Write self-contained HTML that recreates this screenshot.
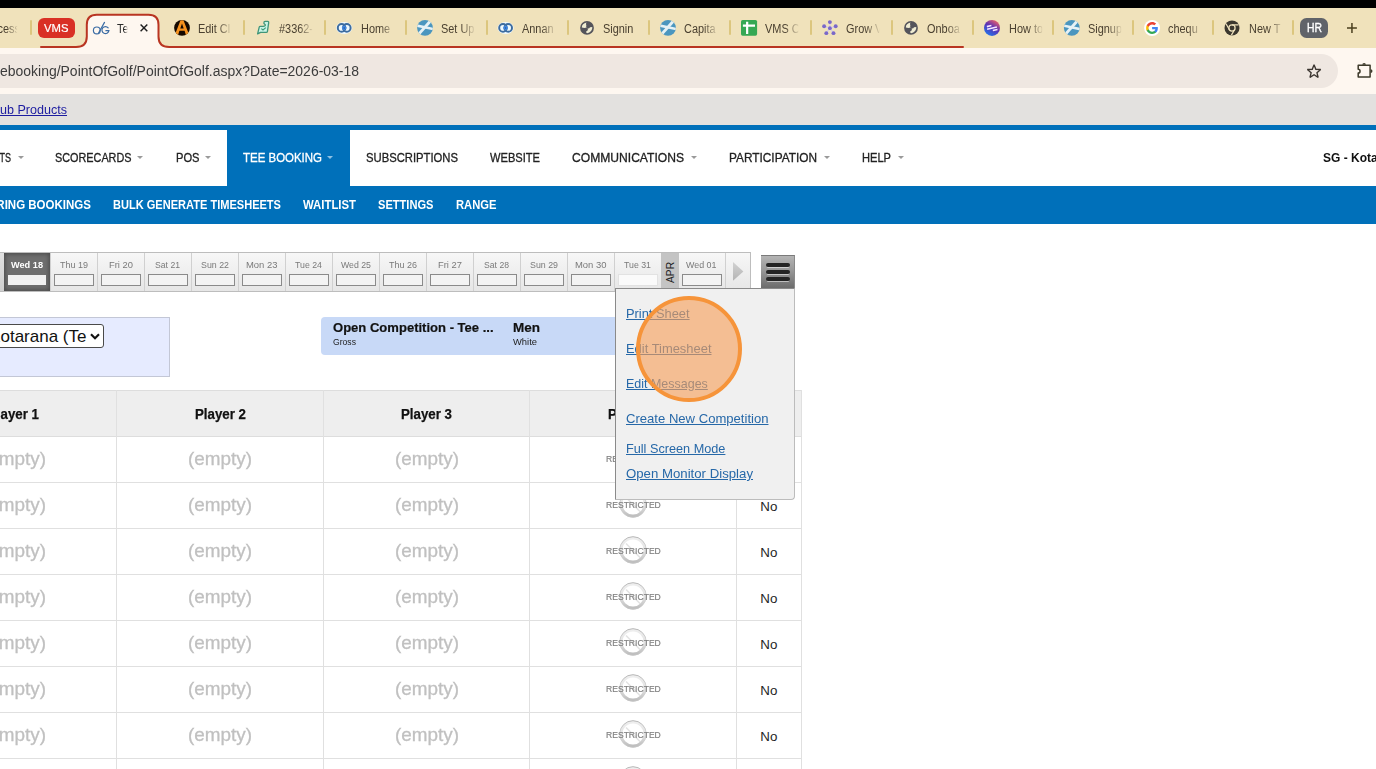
<!DOCTYPE html>
<html>
<head>
<meta charset="utf-8">
<title>Tee Booking</title>
<style>
*{box-sizing:border-box;margin:0;padding:0}
html,body{width:1376px;height:769px;overflow:hidden;background:#fff;font-family:"Liberation Sans",sans-serif;}
#root{position:relative;width:1376px;height:769px;overflow:hidden;background:#fff}
.a{position:absolute}
.t{position:absolute;white-space:nowrap;line-height:1.2;transform-origin:0 0}
svg{position:absolute;overflow:visible}

</style>
</head>
<body>
<div id="root">
<div class="a" style="left:0;top:0;width:1376px;height:8px;background:#000"></div><div class="a" style="left:0;top:8px;width:1376px;height:40px;background:#f0e2bb"></div><div class="a" style="left:0;top:48px;width:1376px;height:46px;background:#fef7f0"></div><div class="a" style="left:-30px;top:54px;width:1368px;height:34px;border-radius:17px;background:#efe7e1"></div><div class="t " style="left:0px;top:63px;font-size:14px;color:#3c3c3c;font-weight:400;transform:scaleX(0.9974);">ebooking/PointOfGolf/PointOfGolf.aspx?Date=2026-03-18</div><div class="a" style="left:0;top:94px;width:1376px;height:31px;background:#e3e1df"></div><div class="t " style="left:0px;top:102px;font-size:13px;color:#1c1ca0;font-weight:400;text-decoration:underline;transform:scaleX(0.9658);">ub Products</div><svg style="left:0;top:8px" width="1376" height="41" viewBox="0 8 1376 41">
<path d="M76 48.5 Q86.8 47.5 86.8 37 V24.8 Q86.8 14.8 96.8 14.8 H148.5 Q158.5 14.8 158.5 24.8 V37 Q158.5 47.5 169.3 48.5 Z" fill="#fef7f0"/>
<path d="M41 47 H76 Q86.8 47 86.8 36.5 V24.8 Q86.8 14.8 96.8 14.8 H148.5 Q158.5 14.8 158.5 24.8 V36.5 Q158.5 47 169.3 47 H963" fill="none" stroke="#b93522" stroke-width="2" stroke-linecap="round"/>
</svg><div class="a" style="left:29.5px;top:20px;width:2px;height:15px;background:#dcc67e;border-radius:1px"></div><div class="a" style="left:243px;top:20px;width:2px;height:15px;background:#dcc67e;border-radius:1px"></div><div class="a" style="left:324px;top:20px;width:2px;height:15px;background:#dcc67e;border-radius:1px"></div><div class="a" style="left:405px;top:20px;width:2px;height:15px;background:#dcc67e;border-radius:1px"></div><div class="a" style="left:486px;top:20px;width:2px;height:15px;background:#dcc67e;border-radius:1px"></div><div class="a" style="left:566.7px;top:20px;width:2px;height:15px;background:#dcc67e;border-radius:1px"></div><div class="a" style="left:647.7px;top:20px;width:2px;height:15px;background:#dcc67e;border-radius:1px"></div><div class="a" style="left:728.7px;top:20px;width:2px;height:15px;background:#dcc67e;border-radius:1px"></div><div class="a" style="left:809.7px;top:20px;width:2px;height:15px;background:#dcc67e;border-radius:1px"></div><div class="a" style="left:890.7px;top:20px;width:2px;height:15px;background:#dcc67e;border-radius:1px"></div><div class="a" style="left:971.8px;top:20px;width:2px;height:15px;background:#dcc67e;border-radius:1px"></div><div class="a" style="left:1051.8px;top:20px;width:2px;height:15px;background:#dcc67e;border-radius:1px"></div><div class="a" style="left:1132px;top:20px;width:2px;height:15px;background:#dcc67e;border-radius:1px"></div><div class="a" style="left:1211.8px;top:20px;width:2px;height:15px;background:#dcc67e;border-radius:1px"></div><div class="a" style="left:1291.7px;top:20px;width:2px;height:15px;background:#dcc67e;border-radius:1px"></div><div class="t " style="left:-8.3px;top:22px;font-size:12px;color:#4a4030;font-weight:400;width:28px;overflow:hidden;transform:scaleX(0.91);-webkit-mask-image:linear-gradient(90deg,#000 58%,transparent 104%);mask-image:linear-gradient(90deg,#000 58%,transparent 104%);">ccess</div><div class="a" style="left:38px;top:18.2px;width:36.8px;height:19.5px;border-radius:6px;background:#d93025"></div><div class="t " style="left:44px;top:22px;font-size:11.5px;color:#fff;font-weight:400;-webkit-text-stroke:0.2px #fff;transform:scaleX(0.9791);">VMS</div><div class="a" style="left:1300px;top:17.8px;width:28.1px;height:19.8px;border-radius:6.5px;background:#606369"></div><div class="t " style="left:1306.6px;top:21px;font-size:12px;color:#fff;font-weight:400;-webkit-text-stroke:0.35px #fff;transform:scaleX(0.8649);">HR</div><svg style="left:1347px;top:23px" width="10" height="10" viewBox="0 0 10 10"><path d="M4.95 0V9.9M0 4.95H9.9" stroke="#4a3f1e" stroke-width="1.5" fill="none"/></svg><div class="t " style="left:117.3px;top:22px;font-size:12px;color:#2b2b2b;font-weight:400;width:11.8px;overflow:hidden;transform:scaleX(0.91);-webkit-mask-image:linear-gradient(90deg,#000 70%,transparent 100%);">Te</div><svg style="left:140.1px;top:24.1px" width="8" height="8" viewBox="0 0 8 8"><path d="M0.6 0.6L7.3 7.3M7.3 0.6L0.6 7.3" stroke="#1f1f1f" stroke-width="1.45" fill="none"/></svg><div class="t " style="left:198.4px;top:22px;font-size:12px;color:#4a4030;font-weight:400;width:37px;overflow:hidden;transform:scaleX(0.91);-webkit-mask-image:linear-gradient(90deg,#000 58%,transparent 104%);mask-image:linear-gradient(90deg,#000 58%,transparent 104%);">Edit Cl</div><div class="t " style="left:278.8px;top:22px;font-size:12px;color:#4a4030;font-weight:400;width:37px;overflow:hidden;transform:scaleX(0.91);-webkit-mask-image:linear-gradient(90deg,#000 58%,transparent 104%);mask-image:linear-gradient(90deg,#000 58%,transparent 104%);">#3362-</div><div class="t " style="left:360.5px;top:22px;font-size:12px;color:#4a4030;font-weight:400;width:37px;overflow:hidden;transform:scaleX(0.91);-webkit-mask-image:linear-gradient(90deg,#000 58%,transparent 104%);mask-image:linear-gradient(90deg,#000 58%,transparent 104%);">Home</div><div class="t " style="left:441px;top:22px;font-size:12px;color:#4a4030;font-weight:400;width:37px;overflow:hidden;transform:scaleX(0.91);-webkit-mask-image:linear-gradient(90deg,#000 58%,transparent 104%);mask-image:linear-gradient(90deg,#000 58%,transparent 104%);">Set Up</div><div class="t " style="left:522px;top:22px;font-size:12px;color:#4a4030;font-weight:400;width:37px;overflow:hidden;transform:scaleX(0.91);-webkit-mask-image:linear-gradient(90deg,#000 58%,transparent 104%);mask-image:linear-gradient(90deg,#000 58%,transparent 104%);">Annan</div><div class="t " style="left:603px;top:22px;font-size:12px;color:#4a4030;font-weight:400;width:37px;overflow:hidden;transform:scaleX(0.91);">Signin</div><div class="t " style="left:684px;top:22px;font-size:12px;color:#4a4030;font-weight:400;width:37px;overflow:hidden;transform:scaleX(0.91);-webkit-mask-image:linear-gradient(90deg,#000 58%,transparent 104%);mask-image:linear-gradient(90deg,#000 58%,transparent 104%);">Capita</div><div class="t " style="left:765px;top:22px;font-size:12px;color:#4a4030;font-weight:400;width:37px;overflow:hidden;transform:scaleX(0.91);-webkit-mask-image:linear-gradient(90deg,#000 58%,transparent 104%);mask-image:linear-gradient(90deg,#000 58%,transparent 104%);">VMS C</div><div class="t " style="left:846px;top:22px;font-size:12px;color:#4a4030;font-weight:400;width:37px;overflow:hidden;transform:scaleX(0.91);-webkit-mask-image:linear-gradient(90deg,#000 58%,transparent 104%);mask-image:linear-gradient(90deg,#000 58%,transparent 104%);">Grow V</div><div class="t " style="left:927.2px;top:22px;font-size:12px;color:#4a4030;font-weight:400;width:37px;overflow:hidden;transform:scaleX(0.91);-webkit-mask-image:linear-gradient(90deg,#000 58%,transparent 104%);mask-image:linear-gradient(90deg,#000 58%,transparent 104%);">Onboa</div><div class="t " style="left:1008.6px;top:22px;font-size:12px;color:#4a4030;font-weight:400;width:37px;overflow:hidden;transform:scaleX(0.91);-webkit-mask-image:linear-gradient(90deg,#000 58%,transparent 104%);mask-image:linear-gradient(90deg,#000 58%,transparent 104%);">How to</div><div class="t " style="left:1088px;top:22px;font-size:12px;color:#4a4030;font-weight:400;width:37px;overflow:hidden;transform:scaleX(0.91);-webkit-mask-image:linear-gradient(90deg,#000 58%,transparent 104%);mask-image:linear-gradient(90deg,#000 58%,transparent 104%);">Signup</div><div class="t " style="left:1168.4px;top:22px;font-size:12px;color:#4a4030;font-weight:400;width:37px;overflow:hidden;transform:scaleX(0.91);-webkit-mask-image:linear-gradient(90deg,#000 58%,transparent 104%);mask-image:linear-gradient(90deg,#000 58%,transparent 104%);">chequ</div><div class="t " style="left:1248.5px;top:22px;font-size:12px;color:#4a4030;font-weight:400;width:37px;overflow:hidden;transform:scaleX(0.91);-webkit-mask-image:linear-gradient(90deg,#000 58%,transparent 104%);mask-image:linear-gradient(90deg,#000 58%,transparent 104%);">New T</div><svg style="left:0;top:48px" width="1376" height="46" viewBox="0 48 1376 46"><path d="M1314.05 64.70L1315.84 69.23L1320.71 69.54L1316.95 72.64L1318.16 77.36L1314.05 74.75L1309.94 77.36L1311.15 72.64L1307.39 69.54L1312.26 69.23Z" fill="none" stroke="#3b3530" stroke-width="1.35" stroke-linejoin="miter" stroke-miterlimit="2"/><path d="M1358.2 65.3H1370.1V77H1358.2V73a1.85 1.85 0 0 0 0-3.7Z" fill="none" stroke="#3d3a2a" stroke-width="1.5" stroke-linejoin="round"/><path d="M1362.3 64.8a1.8 1.9 0 0 1 3.6 0ZM1370.6 69.2a1.9 1.9 0 0 1 0 3.8Z" fill="#3d3a2a"/></svg><svg style="left:0;top:0" width="1376" height="48" viewBox="0 0 1376 48"><g fill="none" stroke="#3b6ca4" stroke-width="1.2" stroke-linecap="round"><circle cx="96.8" cy="30.4" r="3.4"/><path d="M98.7 32.8L104.5 22.4"/><path d="M108.2 27.9A3.5 3.5 0 1 0 108.9 30.7H105.9"/></g><clipPath id="ca"><circle cx="182" cy="27.9" r="7.9"/></clipPath><circle cx="182" cy="27.9" r="7.9" fill="#150900"/><path clip-path="url(#ca)" d="M180.5 20.3H183.5L189.6 36H186.2L184.6 30.8H179.4L177.8 36H174.4ZM182 23.6L180.3 28.4H183.7Z" fill="#f7921e" fill-rule="evenodd"/><path d="M257.6 33.9L259.3 26.9Q259.5 26.3 260.3 26.3H263.2Q265.7 26.2 265.3 24.7Q263.3 23.5 263.9 22.3Q264.3 21.4 265.3 21.4H267.9Q268.8 21.5 268.7 22.6L267.4 31.6Q267.2 32.4 266.4 32.4H260.6Z" fill="#c8f4e6" stroke="#3f9579" stroke-width="1.3" stroke-linejoin="round"/><path d="M261.3 28.6L263 30L265.8 27.6" fill="none" stroke="#3c9b78" stroke-width="1.1"/><ellipse cx="344.2" cy="27.9" rx="8.1" ry="6" fill="#eef9ff"/><g fill="none" stroke="#3d6c9f" stroke-width="2"><circle cx="341.59999999999997" cy="27.9" r="3.8"/><circle cx="346.8" cy="27.9" r="3.8"/></g><rect x="342.3" y="26" width="3.8" height="3.8" rx="0.8" fill="#3f88e6" transform="rotate(45 344.2 27.9)"/><rect x="343.5" y="27.2" width="1.4" height="1.4" fill="#2f5f9a" transform="rotate(45 344.2 27.9)"/><ellipse cx="505.6" cy="27.9" rx="8.1" ry="6" fill="#eef9ff"/><g fill="none" stroke="#3d6c9f" stroke-width="2"><circle cx="503.0" cy="27.9" r="3.8"/><circle cx="508.20000000000005" cy="27.9" r="3.8"/></g><rect x="503.70000000000005" y="26" width="3.8" height="3.8" rx="0.8" fill="#3f88e6" transform="rotate(45 505.6 27.9)"/><rect x="504.90000000000003" y="27.2" width="1.4" height="1.4" fill="#2f5f9a" transform="rotate(45 505.6 27.9)"/><clipPath id="sc425"><circle cx="425" cy="27.9" r="7.9"/></clipPath><circle cx="425" cy="27.9" r="7.9" fill="#4b96bf"/><g clip-path="url(#sc425)" stroke="#e6f1f5" stroke-linecap="butt" fill="none"><path d="M431.3 20L418.3 34.6" stroke-width="2.9"/><path d="M416 25.4L434 29.3" stroke-width="2.5"/></g><clipPath id="sc668"><circle cx="668" cy="27.9" r="7.9"/></clipPath><circle cx="668" cy="27.9" r="7.9" fill="#4b96bf"/><g clip-path="url(#sc668)" stroke="#e6f1f5" stroke-linecap="butt" fill="none"><path d="M674.3 20L661.3 34.6" stroke-width="2.9"/><path d="M659 25.4L677 29.3" stroke-width="2.5"/></g><clipPath id="sc1071"><circle cx="1071.8" cy="27.9" r="7.9"/></clipPath><circle cx="1071.8" cy="27.9" r="7.9" fill="#4b96bf"/><g clip-path="url(#sc1071)" stroke="#e6f1f5" stroke-linecap="butt" fill="none"><path d="M1078.1 20L1065.1 34.6" stroke-width="2.9"/><path d="M1062.8 25.4L1080.8 29.3" stroke-width="2.5"/></g><circle cx="587" cy="27.9" r="6.9" fill="#54545b"/><path d="M581.8 27.5Q582 23.5 586.5 22.6Q585.4 24.2 586.4 25.2Q585.5 26.5 586.8 27.2Q585 28.6 581.8 27.5Z" fill="#efecd2"/><path d="M592.3 27Q592.6 31.5 587.5 33.2Q585.4 32.8 586.2 31.5Q588.6 30.5 587.6 28.6Q589.5 28.8 590 27.2Z" fill="#efecd2"/><circle cx="911" cy="27.9" r="6.9" fill="#54545b"/><path d="M905.8 27.5Q906 23.5 910.5 22.6Q909.4 24.2 910.4 25.2Q909.5 26.5 910.8 27.2Q909 28.6 905.8 27.5Z" fill="#efecd2"/><path d="M916.3 27Q916.6 31.5 911.5 33.2Q909.4 32.8 910.2 31.5Q912.6 30.5 911.6 28.6Q913.5 28.8 914 27.2Z" fill="#efecd2"/><rect x="741" y="19.9" width="16.1" height="15.8" rx="1.6" fill="#35a853"/><path d="M747.15 21.8V33.9M742.9 25.65H755" stroke="#fff" stroke-width="2.2" fill="none"/><path d="M829.9 28.2L829.90 22.10M829.9 28.2L835.70 26.31M829.9 28.2L833.49 33.14M829.9 28.2L826.31 33.14M829.9 28.2L824.10 26.31" stroke="#d3caee" stroke-width="1.2" fill="none"/><g fill="#7a68c9"><circle cx="829.9" cy="28.2" r="1.9"/><circle cx="829.90" cy="22.10" r="1.95"/><circle cx="835.70" cy="26.31" r="1.95"/><circle cx="833.49" cy="33.14" r="1.95"/><circle cx="826.31" cy="33.14" r="1.95"/><circle cx="824.10" cy="26.31" r="1.95"/></g><defs><linearGradient id="hg" x1="0.85" y1="0.1" x2="0.3" y2="1"><stop offset="0" stop-color="#e85f6c"/><stop offset="0.45" stop-color="#5b31b4"/><stop offset="1" stop-color="#2473ea"/></linearGradient></defs><circle cx="992" cy="27.9" r="8" fill="url(#hg)"/><g stroke="#f7e6ff" stroke-width="1.6" fill="none" transform="rotate(-13 992 28)"><path d="M987.3 25.5H992"/><path d="M987 28.1H997"/><path d="M992.2 30.7H997"/></g><circle cx="1152.1" cy="28" r="8" fill="#fff"/><g transform="translate(1146.1 22) scale(0.5)"><path d="M23.5 12.3c0-.8-.1-1.6-.2-2.3H12v4.5h6.5c-.3 1.5-1.100 2.700-2.400 3.600v3h3.900c2.300-2.100 3.500-5.200 3.500-8.800z" fill="#4285f4"/><path d="M12 24c3.200 0 6-1.100 7.900-2.900l-3.900-3c-1.100.7-2.400 1.200-4 1.200-3.100 0-5.800-2.100-6.700-4.900H1.300v3.100C3.300 21.400 7.300 24 12 24z" fill="#34a853"/><path d="M5.300 14.300c-.2-.7-.4-1.500-.4-2.300s.1-1.600.4-2.300V6.600H1.300C.5 8.200 0 10 0 12s.5 3.800 1.300 5.400l4-3.100z" fill="#fbbc05"/><path d="M12 4.800c1.800 0 3.300.6 4.600 1.800l3.400-3.400C17.900 1.200 15.200 0 12 0 7.300 0 3.300 2.700 1.300 6.600l4 3.100c.9-2.800 3.600-4.900 6.700-4.900z" fill="#ea4335"/></g><circle cx="1232" cy="27.9" r="7.5" fill="#3c382f"/><g stroke="#efe2bd" stroke-width="1.25" fill="none"><circle cx="1232" cy="27.9" r="3.1"/><path d="M1232 24.8H1238.6M1229.3 29.45L1226 23.8M1234.7 29.45L1231.4 35.1"/></g></svg><div class="a" style="left:0;top:125px;width:1376px;height:5px;background:#0070ba"></div><div class="a" style="left:227px;top:130px;width:123px;height:56px;background:#0070ba"></div><div class="a" style="left:0;top:186px;width:1376px;height:38px;background:#0070ba"></div><div class="t " style="left:-7px;top:151px;font-size:12.4px;color:#222;font-weight:400;-webkit-text-stroke:0.3px #222;transform:scaleX(0.7259);">NTS</div><div class="a" style="left:18px;top:156px;width:0;height:0;border-left:3px solid transparent;border-right:3px solid transparent;border-top:3px solid #9a9a9a"></div><div class="t " style="left:54.5px;top:151px;font-size:12.4px;color:#222;font-weight:400;-webkit-text-stroke:0.3px #222;transform:scaleX(0.8749);">SCORECARDS</div><div class="a" style="left:137px;top:156px;width:0;height:0;border-left:3px solid transparent;border-right:3px solid transparent;border-top:3px solid #9a9a9a"></div><div class="t " style="left:175.5px;top:151px;font-size:12.4px;color:#222;font-weight:400;-webkit-text-stroke:0.3px #222;transform:scaleX(0.8979);">POS</div><div class="a" style="left:205px;top:156px;width:0;height:0;border-left:3px solid transparent;border-right:3px solid transparent;border-top:3px solid #9a9a9a"></div><div class="t " style="left:243px;top:151px;font-size:12.4px;color:#fff;font-weight:400;-webkit-text-stroke:0.3px #fff;transform:scaleX(0.9253);">TEE BOOKING</div><div class="a" style="left:327px;top:156px;width:0;height:0;border-left:3px solid transparent;border-right:3px solid transparent;border-top:3px solid #8fc1e3"></div><div class="t " style="left:366px;top:151px;font-size:12.4px;color:#222;font-weight:400;-webkit-text-stroke:0.3px #222;transform:scaleX(0.9089);">SUBSCRIPTIONS</div><div class="t " style="left:490px;top:151px;font-size:12.4px;color:#222;font-weight:400;-webkit-text-stroke:0.3px #222;transform:scaleX(0.8966);">WEBSITE</div><div class="t " style="left:572px;top:151px;font-size:12.4px;color:#222;font-weight:400;-webkit-text-stroke:0.3px #222;transform:scaleX(0.9762);">COMMUNICATIONS</div><div class="a" style="left:691px;top:156px;width:0;height:0;border-left:3px solid transparent;border-right:3px solid transparent;border-top:3px solid #9a9a9a"></div><div class="t " style="left:729px;top:151px;font-size:12.4px;color:#222;font-weight:400;-webkit-text-stroke:0.3px #222;transform:scaleX(0.9562);">PARTICIPATION</div><div class="a" style="left:824px;top:156px;width:0;height:0;border-left:3px solid transparent;border-right:3px solid transparent;border-top:3px solid #9a9a9a"></div><div class="t " style="left:862px;top:151px;font-size:12.4px;color:#222;font-weight:400;-webkit-text-stroke:0.3px #222;transform:scaleX(0.8958);">HELP</div><div class="a" style="left:898px;top:156px;width:0;height:0;border-left:3px solid transparent;border-right:3px solid transparent;border-top:3px solid #9a9a9a"></div><div class="t " style="left:1323px;top:151px;font-size:12.6px;color:#111;font-weight:700;transform:scaleX(0.9526);">SG - Kotara</div><div class="t " style="left:-12.5px;top:198px;font-size:12.5px;color:#fff;font-weight:700;transform:scaleX(0.9212);">RRING BOOKINGS</div><div class="t " style="left:113px;top:198px;font-size:12.5px;color:#fff;font-weight:700;transform:scaleX(0.8839);">BULK GENERATE TIMESHEETS</div><div class="t " style="left:303px;top:198px;font-size:12.5px;color:#fff;font-weight:700;transform:scaleX(0.9087);">WAITLIST</div><div class="t " style="left:378px;top:198px;font-size:12.5px;color:#fff;font-weight:700;transform:scaleX(0.8878);">SETTINGS</div><div class="t " style="left:455.5px;top:198px;font-size:12.5px;color:#fff;font-weight:700;transform:scaleX(0.8969);">RANGE</div><div class="a" style="left:-2px;top:252px;width:753px;height:40px;border:1px solid #bdbdbd;background:linear-gradient(#f7f7f7,#e6e6e6)"></div><div class="a" style="left:0;top:253px;width:4px;height:38px;background:linear-gradient(#e0e0e0,#cfcfcf)"></div><div class="a" style="left:4px;top:253px;width:46px;height:38px;background:#6e6e6e;box-shadow:inset 0 0 4px 1px #4a4a4a"></div><div class="t " style="left:11.3px;top:259px;font-size:10px;color:#fff;font-weight:700;transform-origin:0 9px;transform:scale(0.9184,0.9);">Wed 18</div><div class="a" style="left:8px;top:275px;width:38px;height:10px;background:#f1f1f1"></div><div class="a" style="left:50px;top:253px;width:1px;height:38px;background:#d0d0d0"></div><div class="t " style="left:59.7px;top:259px;font-size:10px;color:#7a7a7a;font-weight:400;transform-origin:0 9px;transform:scale(0.8991,0.9);">Thu 19</div><div class="a" style="left:54px;top:274px;width:40px;height:12px;background:#f3f3f3;border:1px solid #8a8a8a"></div><div class="a" style="left:97px;top:253px;width:1px;height:38px;background:#d0d0d0"></div><div class="t " style="left:108.7px;top:259px;font-size:10px;color:#7a7a7a;font-weight:400;transform-origin:0 9px;transform:scale(0.9389,0.9);">Fri 20</div><div class="a" style="left:101px;top:274px;width:40px;height:12px;background:#f3f3f3;border:1px solid #8a8a8a"></div><div class="a" style="left:144px;top:253px;width:1px;height:38px;background:#d0d0d0"></div><div class="t " style="left:155.2px;top:259px;font-size:10px;color:#7a7a7a;font-weight:400;transform-origin:0 9px;transform:scale(0.8644,0.9);">Sat 21</div><div class="a" style="left:148px;top:274px;width:40px;height:12px;background:#f3f3f3;border:1px solid #8a8a8a"></div><div class="a" style="left:191px;top:253px;width:1px;height:38px;background:#d0d0d0"></div><div class="t " style="left:200.7px;top:259px;font-size:10px;color:#7a7a7a;font-weight:400;transform-origin:0 9px;transform:scale(0.8832,0.9);">Sun 22</div><div class="a" style="left:195px;top:274px;width:40px;height:12px;background:#f3f3f3;border:1px solid #8a8a8a"></div><div class="a" style="left:238px;top:253px;width:1px;height:38px;background:#d0d0d0"></div><div class="t " style="left:245.95px;top:259px;font-size:10px;color:#7a7a7a;font-weight:400;transform-origin:0 9px;transform:scale(0.9443,0.9);">Mon 23</div><div class="a" style="left:242px;top:274px;width:40px;height:12px;background:#f3f3f3;border:1px solid #8a8a8a"></div><div class="a" style="left:285px;top:253px;width:1px;height:38px;background:#d0d0d0"></div><div class="t " style="left:295.2px;top:259px;font-size:10px;color:#7a7a7a;font-weight:400;transform-origin:0 9px;transform:scale(0.8776,0.9);">Tue 24</div><div class="a" style="left:289px;top:274px;width:40px;height:12px;background:#f3f3f3;border:1px solid #8a8a8a"></div><div class="a" style="left:332px;top:253px;width:1px;height:38px;background:#d0d0d0"></div><div class="t " style="left:340.7px;top:259px;font-size:10px;color:#7a7a7a;font-weight:400;transform-origin:0 9px;transform:scale(0.8747,0.9);">Wed 25</div><div class="a" style="left:336px;top:274px;width:40px;height:12px;background:#f3f3f3;border:1px solid #8a8a8a"></div><div class="a" style="left:379px;top:253px;width:1px;height:38px;background:#d0d0d0"></div><div class="t " style="left:388.7px;top:259px;font-size:10px;color:#7a7a7a;font-weight:400;transform-origin:0 9px;transform:scale(0.8991,0.9);">Thu 26</div><div class="a" style="left:383px;top:274px;width:40px;height:12px;background:#f3f3f3;border:1px solid #8a8a8a"></div><div class="a" style="left:426px;top:253px;width:1px;height:38px;background:#d0d0d0"></div><div class="t " style="left:437.7px;top:259px;font-size:10px;color:#7a7a7a;font-weight:400;transform-origin:0 9px;transform:scale(0.9389,0.9);">Fri 27</div><div class="a" style="left:430px;top:274px;width:40px;height:12px;background:#f3f3f3;border:1px solid #8a8a8a"></div><div class="a" style="left:473px;top:253px;width:1px;height:38px;background:#d0d0d0"></div><div class="t " style="left:484.2px;top:259px;font-size:10px;color:#7a7a7a;font-weight:400;transform-origin:0 9px;transform:scale(0.8644,0.9);">Sat 28</div><div class="a" style="left:477px;top:274px;width:40px;height:12px;background:#f3f3f3;border:1px solid #8a8a8a"></div><div class="a" style="left:520px;top:253px;width:1px;height:38px;background:#d0d0d0"></div><div class="t " style="left:529.7px;top:259px;font-size:10px;color:#7a7a7a;font-weight:400;transform-origin:0 9px;transform:scale(0.8832,0.9);">Sun 29</div><div class="a" style="left:524px;top:274px;width:40px;height:12px;background:#f3f3f3;border:1px solid #8a8a8a"></div><div class="a" style="left:567px;top:253px;width:1px;height:38px;background:#d0d0d0"></div><div class="t " style="left:574.95px;top:259px;font-size:10px;color:#7a7a7a;font-weight:400;transform-origin:0 9px;transform:scale(0.9443,0.9);">Mon 30</div><div class="a" style="left:571px;top:274px;width:40px;height:12px;background:#f3f3f3;border:1px solid #8a8a8a"></div><div class="a" style="left:614px;top:253px;width:1px;height:38px;background:#d0d0d0"></div><div class="t " style="left:624.2px;top:259px;font-size:10px;color:#7a7a7a;font-weight:400;transform-origin:0 9px;transform:scale(0.8776,0.9);">Tue 31</div><div class="a" style="left:618px;top:274px;width:40px;height:12px;background:#fafafa;border:1px solid #e2e2e2"></div><div class="a" style="left:661px;top:253px;width:18px;height:38px;background:#c4c4c4"></div><div class="t" style="left:664.3px;top:283.3px;font-size:11px;color:#222;transform:rotate(-90deg) scaleX(0.93);transform-origin:0 0;line-height:12px">APR</div><div class="t " style="left:686.4px;top:259px;font-size:10px;color:#7a7a7a;font-weight:400;transform-origin:0 9px;transform:scale(0.8893,0.9);">Wed 01</div><div class="a" style="left:682.3px;top:274px;width:39.5px;height:12px;background:#f3f3f3;border:1px solid #8a8a8a"></div><div class="a" style="left:725px;top:253px;width:1px;height:38px;background:#d0d0d0"></div><svg style="left:732.6px;top:262px" width="11" height="19" viewBox="0 0 11 19"><defs><linearGradient id="ag" x1="0" y1="0" x2="0" y2="1"><stop offset="0" stop-color="#d2d2d2"/><stop offset="1" stop-color="#b4b4b4"/></linearGradient></defs><path d="M0 0L10.4 9.4L0 18.8Z" fill="url(#ag)"/></svg><div class="a" style="left:761px;top:255px;width:34px;height:33px;background:linear-gradient(#b4b4b4,#989898 45%,#6c6c6c);border-top:1px solid #7a7a7a;border-right:1px solid #8a8a8a"></div><div class="a" style="left:766.6px;top:266.2px;width:22.8px;height:1.6px;border-radius:1px;background:rgba(255,255,255,.5)"></div><div class="a" style="left:766.1px;top:263px;width:23.9px;height:3.8px;border-radius:2px;background:#242424"></div><div class="a" style="left:766.6px;top:273.2px;width:22.8px;height:1.6px;border-radius:1px;background:rgba(255,255,255,.5)"></div><div class="a" style="left:766.1px;top:270px;width:23.9px;height:3.8px;border-radius:2px;background:#242424"></div><div class="a" style="left:766.6px;top:280.2px;width:22.8px;height:1.6px;border-radius:1px;background:rgba(255,255,255,.5)"></div><div class="a" style="left:766.1px;top:277px;width:23.9px;height:3.8px;border-radius:2px;background:#242424"></div><div class="a" style="left:-10px;top:317px;width:180px;height:60px;background:#e6ebff;border:1px solid #c3c7d6"></div><div class="a" style="left:-20px;top:324px;width:124px;height:24px;background:#fff;border:1px solid #4a4a4a;border-radius:3px"></div><div class="t " style="left:-10.9px;top:327px;font-size:17px;color:#111;font-weight:400;">Kotarana (Te</div><svg style="left:90.4px;top:332.6px" width="10" height="7" viewBox="0 0 10 7"><path d="M1 1.2L5 5.3L9 1.2" fill="none" stroke="#111" stroke-width="2.1"/></svg><div class="a" style="left:320.8px;top:317px;width:320px;height:37.5px;background:#c8d9f7;border-radius:4px"></div><div class="t " style="left:333.2px;top:320px;font-size:13px;color:#111;font-weight:700;-webkit-text-stroke:0.2px #111;transform:scaleX(1.0031);">Open Competition - Tee ...</div><div class="t " style="left:513.4px;top:320px;font-size:13px;color:#111;font-weight:700;-webkit-text-stroke:0.2px #111;transform:scaleX(1.0385);">Men</div><div class="t " style="left:333.2px;top:337px;font-size:9px;color:#222;font-weight:400;transform:scaleX(0.9577);">Gross</div><div class="t " style="left:513.4px;top:337px;font-size:9px;color:#222;font-weight:400;transform:scaleX(1.0428);">White</div><div class="a" style="left:0;top:390px;width:802px;height:47px;background:#eeeeee;border-top:1px solid #ddd;border-bottom:1px solid #ddd"></div><div class="a" style="left:0;top:482px;width:802px;height:1px;background:#e0e0e0"></div><div class="a" style="left:0;top:528px;width:802px;height:1px;background:#e0e0e0"></div><div class="a" style="left:0;top:574px;width:802px;height:1px;background:#e0e0e0"></div><div class="a" style="left:0;top:620px;width:802px;height:1px;background:#e0e0e0"></div><div class="a" style="left:0;top:666px;width:802px;height:1px;background:#e0e0e0"></div><div class="a" style="left:0;top:712px;width:802px;height:1px;background:#e0e0e0"></div><div class="a" style="left:0;top:758px;width:802px;height:1px;background:#e0e0e0"></div><div class="a" style="left:0;top:804px;width:802px;height:1px;background:#e0e0e0"></div><div class="a" style="left:116px;top:390px;width:1px;height:380px;background:#e0e0e0"></div><div class="a" style="left:323px;top:390px;width:1px;height:380px;background:#e0e0e0"></div><div class="a" style="left:529px;top:390px;width:1px;height:380px;background:#e0e0e0"></div><div class="a" style="left:736px;top:390px;width:1px;height:380px;background:#e0e0e0"></div><div class="a" style="left:801px;top:390px;width:1px;height:380px;background:#e0e0e0"></div><div class="t " style="left:-12.5px;top:406px;font-size:14px;color:#111;font-weight:700;-webkit-text-stroke:0.25px #111;transform:scaleX(0.9494);">Player 1</div><div class="t " style="left:194.5px;top:406px;font-size:14px;color:#111;font-weight:700;-webkit-text-stroke:0.25px #111;transform:scaleX(0.9494);">Player 2</div><div class="t " style="left:401.0px;top:406px;font-size:14px;color:#111;font-weight:700;-webkit-text-stroke:0.25px #111;transform:scaleX(0.9494);">Player 3</div><div class="t " style="left:607.9px;top:406px;font-size:14px;color:#111;font-weight:700;-webkit-text-stroke:0.25px #111;transform:scaleX(0.9494);">Player 4</div><div class="t " style="left:-18.5px;top:448px;font-size:18.5px;color:#c0c0c0;font-weight:400;-webkit-text-stroke:0.3px #c0c0c0;transform:scaleX(1.0207);">(empty)</div><div class="t " style="left:188px;top:448px;font-size:18.5px;color:#c0c0c0;font-weight:400;-webkit-text-stroke:0.3px #c0c0c0;transform:scaleX(1.0207);">(empty)</div><div class="t " style="left:394.5px;top:448px;font-size:18.5px;color:#c0c0c0;font-weight:400;-webkit-text-stroke:0.3px #c0c0c0;transform:scaleX(1.0207);">(empty)</div><svg style="left:617.9px;top:442.8px" width="30" height="30" viewBox="0 0 30 30"><defs><linearGradient id="rg0" x1="0" y1="0" x2="0" y2="1"><stop offset="0" stop-color="#eeeeee"/><stop offset="0.55" stop-color="#e2e2e2"/><stop offset="1" stop-color="#bdbdbd"/></linearGradient><linearGradient id="ro0" x1="0" y1="0" x2="0" y2="1"><stop offset="0" stop-color="#a8a8a8"/><stop offset="0.5" stop-color="#d6d6d6"/><stop offset="1" stop-color="#c4c4c4"/></linearGradient></defs><path d="M8 8.5L22.5 23" stroke="#e3e3e3" stroke-width="1.6"/><circle cx="15" cy="15" r="12" fill="none" stroke="url(#rg0)" stroke-width="2.8"/><circle cx="15" cy="15" r="13.3" fill="none" stroke="url(#ro0)" stroke-width="0.8"/></svg><div class="t " style="left:606px;top:453px;font-size:10px;color:#808080;font-weight:400;-webkit-text-stroke:0.2px #808080;transform-origin:0 9px;transform:scale(0.8575,0.9);">RESTRICTED</div><div class="t " style="left:760.3px;top:453px;font-size:13.33px;color:#1e1e1e;font-weight:400;">No</div><div class="t " style="left:-18.5px;top:494px;font-size:18.5px;color:#c0c0c0;font-weight:400;-webkit-text-stroke:0.3px #c0c0c0;transform:scaleX(1.0207);">(empty)</div><div class="t " style="left:188px;top:494px;font-size:18.5px;color:#c0c0c0;font-weight:400;-webkit-text-stroke:0.3px #c0c0c0;transform:scaleX(1.0207);">(empty)</div><div class="t " style="left:394.5px;top:494px;font-size:18.5px;color:#c0c0c0;font-weight:400;-webkit-text-stroke:0.3px #c0c0c0;transform:scaleX(1.0207);">(empty)</div><svg style="left:617.9px;top:488.8px" width="30" height="30" viewBox="0 0 30 30"><defs><linearGradient id="rg1" x1="0" y1="0" x2="0" y2="1"><stop offset="0" stop-color="#eeeeee"/><stop offset="0.55" stop-color="#e2e2e2"/><stop offset="1" stop-color="#bdbdbd"/></linearGradient><linearGradient id="ro1" x1="0" y1="0" x2="0" y2="1"><stop offset="0" stop-color="#a8a8a8"/><stop offset="0.5" stop-color="#d6d6d6"/><stop offset="1" stop-color="#c4c4c4"/></linearGradient></defs><path d="M8 8.5L22.5 23" stroke="#e3e3e3" stroke-width="1.6"/><circle cx="15" cy="15" r="12" fill="none" stroke="url(#rg1)" stroke-width="2.8"/><circle cx="15" cy="15" r="13.3" fill="none" stroke="url(#ro1)" stroke-width="0.8"/></svg><div class="t " style="left:606px;top:499px;font-size:10px;color:#808080;font-weight:400;-webkit-text-stroke:0.2px #808080;transform-origin:0 9px;transform:scale(0.8575,0.9);">RESTRICTED</div><div class="t " style="left:760.3px;top:499px;font-size:13.33px;color:#1e1e1e;font-weight:400;">No</div><div class="t " style="left:-18.5px;top:540px;font-size:18.5px;color:#c0c0c0;font-weight:400;-webkit-text-stroke:0.3px #c0c0c0;transform:scaleX(1.0207);">(empty)</div><div class="t " style="left:188px;top:540px;font-size:18.5px;color:#c0c0c0;font-weight:400;-webkit-text-stroke:0.3px #c0c0c0;transform:scaleX(1.0207);">(empty)</div><div class="t " style="left:394.5px;top:540px;font-size:18.5px;color:#c0c0c0;font-weight:400;-webkit-text-stroke:0.3px #c0c0c0;transform:scaleX(1.0207);">(empty)</div><svg style="left:617.9px;top:534.8px" width="30" height="30" viewBox="0 0 30 30"><defs><linearGradient id="rg2" x1="0" y1="0" x2="0" y2="1"><stop offset="0" stop-color="#eeeeee"/><stop offset="0.55" stop-color="#e2e2e2"/><stop offset="1" stop-color="#bdbdbd"/></linearGradient><linearGradient id="ro2" x1="0" y1="0" x2="0" y2="1"><stop offset="0" stop-color="#a8a8a8"/><stop offset="0.5" stop-color="#d6d6d6"/><stop offset="1" stop-color="#c4c4c4"/></linearGradient></defs><path d="M8 8.5L22.5 23" stroke="#e3e3e3" stroke-width="1.6"/><circle cx="15" cy="15" r="12" fill="none" stroke="url(#rg2)" stroke-width="2.8"/><circle cx="15" cy="15" r="13.3" fill="none" stroke="url(#ro2)" stroke-width="0.8"/></svg><div class="t " style="left:606px;top:545px;font-size:10px;color:#808080;font-weight:400;-webkit-text-stroke:0.2px #808080;transform-origin:0 9px;transform:scale(0.8575,0.9);">RESTRICTED</div><div class="t " style="left:760.3px;top:545px;font-size:13.33px;color:#1e1e1e;font-weight:400;">No</div><div class="t " style="left:-18.5px;top:586px;font-size:18.5px;color:#c0c0c0;font-weight:400;-webkit-text-stroke:0.3px #c0c0c0;transform:scaleX(1.0207);">(empty)</div><div class="t " style="left:188px;top:586px;font-size:18.5px;color:#c0c0c0;font-weight:400;-webkit-text-stroke:0.3px #c0c0c0;transform:scaleX(1.0207);">(empty)</div><div class="t " style="left:394.5px;top:586px;font-size:18.5px;color:#c0c0c0;font-weight:400;-webkit-text-stroke:0.3px #c0c0c0;transform:scaleX(1.0207);">(empty)</div><svg style="left:617.9px;top:580.8px" width="30" height="30" viewBox="0 0 30 30"><defs><linearGradient id="rg3" x1="0" y1="0" x2="0" y2="1"><stop offset="0" stop-color="#eeeeee"/><stop offset="0.55" stop-color="#e2e2e2"/><stop offset="1" stop-color="#bdbdbd"/></linearGradient><linearGradient id="ro3" x1="0" y1="0" x2="0" y2="1"><stop offset="0" stop-color="#a8a8a8"/><stop offset="0.5" stop-color="#d6d6d6"/><stop offset="1" stop-color="#c4c4c4"/></linearGradient></defs><path d="M8 8.5L22.5 23" stroke="#e3e3e3" stroke-width="1.6"/><circle cx="15" cy="15" r="12" fill="none" stroke="url(#rg3)" stroke-width="2.8"/><circle cx="15" cy="15" r="13.3" fill="none" stroke="url(#ro3)" stroke-width="0.8"/></svg><div class="t " style="left:606px;top:591px;font-size:10px;color:#808080;font-weight:400;-webkit-text-stroke:0.2px #808080;transform-origin:0 9px;transform:scale(0.8575,0.9);">RESTRICTED</div><div class="t " style="left:760.3px;top:591px;font-size:13.33px;color:#1e1e1e;font-weight:400;">No</div><div class="t " style="left:-18.5px;top:632px;font-size:18.5px;color:#c0c0c0;font-weight:400;-webkit-text-stroke:0.3px #c0c0c0;transform:scaleX(1.0207);">(empty)</div><div class="t " style="left:188px;top:632px;font-size:18.5px;color:#c0c0c0;font-weight:400;-webkit-text-stroke:0.3px #c0c0c0;transform:scaleX(1.0207);">(empty)</div><div class="t " style="left:394.5px;top:632px;font-size:18.5px;color:#c0c0c0;font-weight:400;-webkit-text-stroke:0.3px #c0c0c0;transform:scaleX(1.0207);">(empty)</div><svg style="left:617.9px;top:626.8px" width="30" height="30" viewBox="0 0 30 30"><defs><linearGradient id="rg4" x1="0" y1="0" x2="0" y2="1"><stop offset="0" stop-color="#eeeeee"/><stop offset="0.55" stop-color="#e2e2e2"/><stop offset="1" stop-color="#bdbdbd"/></linearGradient><linearGradient id="ro4" x1="0" y1="0" x2="0" y2="1"><stop offset="0" stop-color="#a8a8a8"/><stop offset="0.5" stop-color="#d6d6d6"/><stop offset="1" stop-color="#c4c4c4"/></linearGradient></defs><path d="M8 8.5L22.5 23" stroke="#e3e3e3" stroke-width="1.6"/><circle cx="15" cy="15" r="12" fill="none" stroke="url(#rg4)" stroke-width="2.8"/><circle cx="15" cy="15" r="13.3" fill="none" stroke="url(#ro4)" stroke-width="0.8"/></svg><div class="t " style="left:606px;top:637px;font-size:10px;color:#808080;font-weight:400;-webkit-text-stroke:0.2px #808080;transform-origin:0 9px;transform:scale(0.8575,0.9);">RESTRICTED</div><div class="t " style="left:760.3px;top:637px;font-size:13.33px;color:#1e1e1e;font-weight:400;">No</div><div class="t " style="left:-18.5px;top:678px;font-size:18.5px;color:#c0c0c0;font-weight:400;-webkit-text-stroke:0.3px #c0c0c0;transform:scaleX(1.0207);">(empty)</div><div class="t " style="left:188px;top:678px;font-size:18.5px;color:#c0c0c0;font-weight:400;-webkit-text-stroke:0.3px #c0c0c0;transform:scaleX(1.0207);">(empty)</div><div class="t " style="left:394.5px;top:678px;font-size:18.5px;color:#c0c0c0;font-weight:400;-webkit-text-stroke:0.3px #c0c0c0;transform:scaleX(1.0207);">(empty)</div><svg style="left:617.9px;top:672.8px" width="30" height="30" viewBox="0 0 30 30"><defs><linearGradient id="rg5" x1="0" y1="0" x2="0" y2="1"><stop offset="0" stop-color="#eeeeee"/><stop offset="0.55" stop-color="#e2e2e2"/><stop offset="1" stop-color="#bdbdbd"/></linearGradient><linearGradient id="ro5" x1="0" y1="0" x2="0" y2="1"><stop offset="0" stop-color="#a8a8a8"/><stop offset="0.5" stop-color="#d6d6d6"/><stop offset="1" stop-color="#c4c4c4"/></linearGradient></defs><path d="M8 8.5L22.5 23" stroke="#e3e3e3" stroke-width="1.6"/><circle cx="15" cy="15" r="12" fill="none" stroke="url(#rg5)" stroke-width="2.8"/><circle cx="15" cy="15" r="13.3" fill="none" stroke="url(#ro5)" stroke-width="0.8"/></svg><div class="t " style="left:606px;top:683px;font-size:10px;color:#808080;font-weight:400;-webkit-text-stroke:0.2px #808080;transform-origin:0 9px;transform:scale(0.8575,0.9);">RESTRICTED</div><div class="t " style="left:760.3px;top:683px;font-size:13.33px;color:#1e1e1e;font-weight:400;">No</div><div class="t " style="left:-18.5px;top:724px;font-size:18.5px;color:#c0c0c0;font-weight:400;-webkit-text-stroke:0.3px #c0c0c0;transform:scaleX(1.0207);">(empty)</div><div class="t " style="left:188px;top:724px;font-size:18.5px;color:#c0c0c0;font-weight:400;-webkit-text-stroke:0.3px #c0c0c0;transform:scaleX(1.0207);">(empty)</div><div class="t " style="left:394.5px;top:724px;font-size:18.5px;color:#c0c0c0;font-weight:400;-webkit-text-stroke:0.3px #c0c0c0;transform:scaleX(1.0207);">(empty)</div><svg style="left:617.9px;top:718.8px" width="30" height="30" viewBox="0 0 30 30"><defs><linearGradient id="rg6" x1="0" y1="0" x2="0" y2="1"><stop offset="0" stop-color="#eeeeee"/><stop offset="0.55" stop-color="#e2e2e2"/><stop offset="1" stop-color="#bdbdbd"/></linearGradient><linearGradient id="ro6" x1="0" y1="0" x2="0" y2="1"><stop offset="0" stop-color="#a8a8a8"/><stop offset="0.5" stop-color="#d6d6d6"/><stop offset="1" stop-color="#c4c4c4"/></linearGradient></defs><path d="M8 8.5L22.5 23" stroke="#e3e3e3" stroke-width="1.6"/><circle cx="15" cy="15" r="12" fill="none" stroke="url(#rg6)" stroke-width="2.8"/><circle cx="15" cy="15" r="13.3" fill="none" stroke="url(#ro6)" stroke-width="0.8"/></svg><div class="t " style="left:606px;top:729px;font-size:10px;color:#808080;font-weight:400;-webkit-text-stroke:0.2px #808080;transform-origin:0 9px;transform:scale(0.8575,0.9);">RESTRICTED</div><div class="t " style="left:760.3px;top:729px;font-size:13.33px;color:#1e1e1e;font-weight:400;">No</div><div class="t " style="left:-18.5px;top:770px;font-size:18.5px;color:#c0c0c0;font-weight:400;-webkit-text-stroke:0.3px #c0c0c0;transform:scaleX(1.0207);">(empty)</div><div class="t " style="left:188px;top:770px;font-size:18.5px;color:#c0c0c0;font-weight:400;-webkit-text-stroke:0.3px #c0c0c0;transform:scaleX(1.0207);">(empty)</div><div class="t " style="left:394.5px;top:770px;font-size:18.5px;color:#c0c0c0;font-weight:400;-webkit-text-stroke:0.3px #c0c0c0;transform:scaleX(1.0207);">(empty)</div><svg style="left:617.9px;top:764.8px" width="30" height="30" viewBox="0 0 30 30"><defs><linearGradient id="rg7" x1="0" y1="0" x2="0" y2="1"><stop offset="0" stop-color="#eeeeee"/><stop offset="0.55" stop-color="#e2e2e2"/><stop offset="1" stop-color="#bdbdbd"/></linearGradient><linearGradient id="ro7" x1="0" y1="0" x2="0" y2="1"><stop offset="0" stop-color="#a8a8a8"/><stop offset="0.5" stop-color="#d6d6d6"/><stop offset="1" stop-color="#c4c4c4"/></linearGradient></defs><path d="M8 8.5L22.5 23" stroke="#e3e3e3" stroke-width="1.6"/><circle cx="15" cy="15" r="12" fill="none" stroke="url(#rg7)" stroke-width="2.8"/><circle cx="15" cy="15" r="13.3" fill="none" stroke="url(#ro7)" stroke-width="0.8"/></svg><div class="t " style="left:606px;top:775px;font-size:10px;color:#808080;font-weight:400;-webkit-text-stroke:0.2px #808080;transform-origin:0 9px;transform:scale(0.8575,0.9);">RESTRICTED</div><div class="t " style="left:760.3px;top:775px;font-size:13.33px;color:#1e1e1e;font-weight:400;">No</div><div class="a" style="left:615px;top:288px;width:180px;height:212px;background:#f0f0f0;border:1px solid #bcbcbc;border-top-color:#8a8a8a;border-left-color:#8a8a8a;border-radius:0 0 4px 0"></div><div class="t " style="left:626px;top:306px;font-size:13px;color:#2668a8;font-weight:400;text-decoration:underline;transform:scaleX(0.9887);">Print Sheet</div><div class="t " style="left:626px;top:341px;font-size:13px;color:#2668a8;font-weight:400;text-decoration:underline;transform:scaleX(0.9942);">Edit Timesheet</div><div class="t " style="left:626px;top:376px;font-size:13px;color:#2668a8;font-weight:400;text-decoration:underline;transform:scaleX(0.9594);">Edit Messages</div><div class="t " style="left:626px;top:411px;font-size:13px;color:#2668a8;font-weight:400;text-decoration:underline;transform:scaleX(1.0062);">Create New Competition</div><div class="t " style="left:626px;top:441px;font-size:13px;color:#2668a8;font-weight:400;text-decoration:underline;transform:scaleX(0.9756);">Full Screen Mode</div><div class="t " style="left:626px;top:466px;font-size:13px;color:#2668a8;font-weight:400;text-decoration:underline;transform:scaleX(1.0160);">Open Monitor Display</div><div class="a" style="left:635.7px;top:296px;width:106px;height:106px;border-radius:50%;background:rgba(247,160,90,.62);border:4px solid #f6943a"></div>
</div>
</body>
</html>
